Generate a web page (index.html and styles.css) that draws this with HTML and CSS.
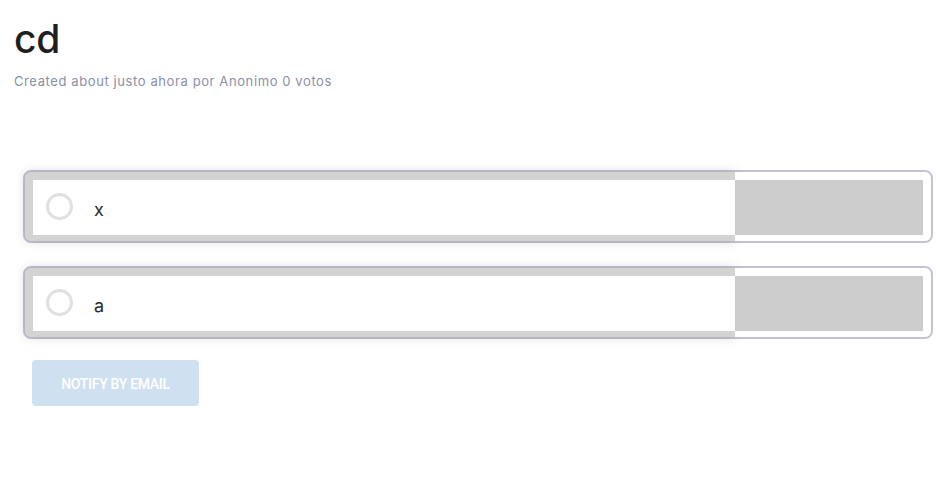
FILE: index.html
```html
<!DOCTYPE html>
<html>
<head>
<meta charset="utf-8">
<link rel="stylesheet" href="styles.css">
</head>
<body>
<div class="page">
  <h1 class="title">cd</h1>
  <p class="meta">Created about justo ahora por Anonimo 0 votos</p>
  <div class="options">
    <div class="option">
      <div class="option-main">
        <div class="option-inner">
          <span class="radio"></span>
          <span class="label">x</span>
        </div>
      </div>
      <div class="option-bar"><div class="bar-fill"></div></div>
    </div>
    <div class="option">
      <div class="option-main">
        <div class="option-inner">
          <span class="radio"></span>
          <span class="label">a</span>
        </div>
      </div>
      <div class="option-bar"><div class="bar-fill"></div></div>
    </div>
  </div>
  <button class="notify">NOTIFY BY EMAIL</button>
</div>
</body>
</html>
```
FILE: styles.css
```css
html, body {
  margin: 0;
  padding: 0;
  background: #fff;
}
.page {
  padding: 14px 7px 0 14px;
  font-family: Inter, "Open Sans", sans-serif;
}
.title {
  margin: 0;
  font-size: 39px;
  font-weight: 500;
  line-height: 50px;
  color: #1f1f1f;
  letter-spacing: -0.3px;
}
.meta {
  margin: 8px 0 0 0;
  font-size: 13px;
  line-height: 18px;
  color: #8a90a8;
  letter-spacing: 0.6px;
}
.options {
  margin: 80px 0 0 9px;
  display: flex;
  flex-direction: column;
  gap: 23px;
}
.option {
  display: flex;
  border: 2px solid #c3c3d3;
  border-radius: 8px;
  background: #d3d3d3;
  height: 69px;
}
.option-main {
  width: 702px;
  padding: 8px 0 6px 8px;
  border-radius: 6px 0 0 6px;
  background: #d3d3d3;
  box-shadow: 0 0 12px rgba(0, 0, 0, 0.16);
  display: flex;
}
.option-inner {
  flex: 1;
  background: #fff;
  display: flex;
  align-items: center;
  padding-left: 13px;
}
.radio {
  width: 21px;
  height: 21px;
  border: 3px solid #e0e0e0;
  border-radius: 50%;
  margin-top: -3px;
}
.label {
  margin-left: 21px;
  font-size: 18px;
  color: #2a2a2a;
  margin-top: 4px;
}
.option-bar {
  flex: 1;
  background: #fff;
  border-radius: 0 6px 6px 0;
  padding: 8px 8px 6px 0;
  display: flex;
}
.bar-fill {
  flex: 1;
  background: #cccccc;
}
.notify {
  margin: 21px 0 0 18px;
  width: 167px;
  height: 46px;
  border: none;
  border-radius: 4px;
  background: #cfe0f1;
  color: #fff;
  font-family: Roboto, "Liberation Sans", sans-serif;
  font-weight: 500;
  font-size: 14px;
  letter-spacing: -0.3px;
  padding: 2px 0 0 0;
}
```
